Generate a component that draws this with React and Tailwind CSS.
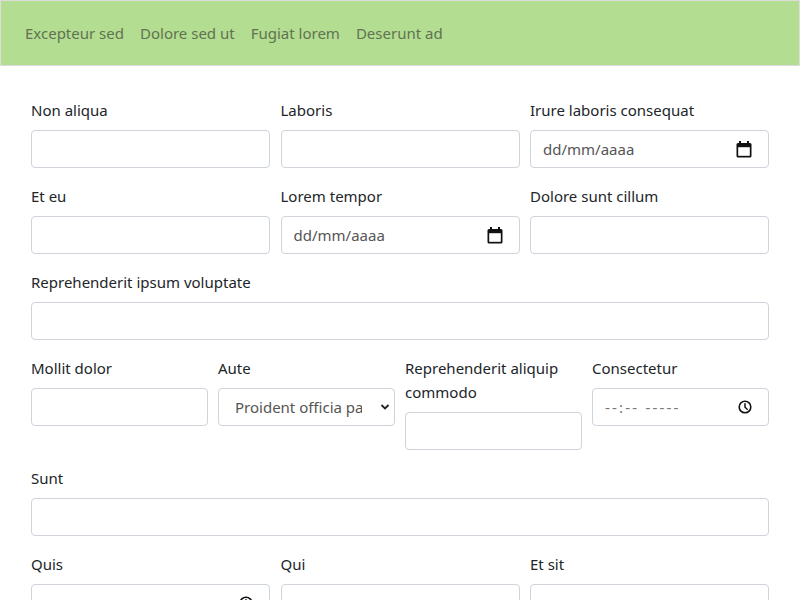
import React from "react";

const font = { fontFamily: '"Noto Sans", "Open Sans", sans-serif' };

function Label({ children }) {
  return <label className="block mb-2 text-[15px] leading-6 text-[#212529]">{children}</label>;
}

function TextInput() {
  return (
    <input
      type="text"
      className="block w-full h-[38px] rounded-[4px] border border-[#ced4da] bg-white px-3 text-[15px] text-[#212529] outline-none"
    />
  );
}

function CalendarIcon() {
  return (
    <svg width="16" height="17" viewBox="0 0 16 17" className="shrink-0">
      <rect x="3" y="0" width="2" height="3" fill="#111" />
      <rect x="11" y="0" width="2" height="3" fill="#111" />
      <rect x="0.5" y="2" width="15" height="14.5" rx="1.5" fill="#111" />
      <rect x="2.2" y="6.2" width="11.6" height="8.6" fill="#fff" />
    </svg>
  );
}

function ClockIcon() {
  return (
    <svg width="14" height="14" viewBox="0 0 14 14" className="shrink-0">
      <circle cx="7" cy="7" r="5.8" fill="none" stroke="#111" strokeWidth="1.6" />
      <path d="M7 3.8 V7.2 L9.2 9.2" fill="none" stroke="#111" strokeWidth="1.5" strokeLinecap="round" />
    </svg>
  );
}

function DateInput() {
  return (
    <div className="flex items-center justify-between w-full h-[38px] rounded-[4px] border border-[#ced4da] bg-white pl-3 pr-[16px] text-[15px] text-[#555]">
      <span>dd/mm/aaaa</span>
      <CalendarIcon />
    </div>
  );
}

function TimeInput() {
  return (
    <div className="flex items-center justify-between w-full h-[38px] rounded-[4px] border border-[#ced4da] bg-white pl-3 pr-[16px] text-[15px] text-[#777]">
      <span className="tracking-[2.2px]">--:-- -----</span>
      <ClockIcon />
    </div>
  );
}

function SelectInput() {
  return (
    <div className="relative w-full">
      <select
        className="block w-full h-[38px] appearance-none rounded-[4px] border border-[#ced4da] bg-white pl-4 pr-8 text-[15px] text-[#555] outline-none"
        style={font}
        defaultValue="a"
      >
        <option value="a">Proident officia pariatur</option>
      </select>
      <svg width="10" height="8" viewBox="0 0 10 8" className="absolute right-[5px] top-[15px] pointer-events-none">
        <path d="M1.5 2 L5 5.5 L8.5 2" fill="none" stroke="#222" strokeWidth="1.8" />
      </svg>
    </div>
  );
}

function Field({ label, children }) {
  return (
    <div className="mb-4">
      <Label>{label}</Label>
      {children}
    </div>
  );
}

export default function App() {
  return (
    <div className="w-[800px] h-[600px] overflow-hidden bg-white" style={font}>
      <nav className="h-[66px] border border-[#dcdcdc] bg-[#b3dd91] flex items-center px-4">
        {["Excepteur sed", "Dolore sed ut", "Fugiat lorem", "Deserunt ad"].map((t) => (
          <a key={t} className="px-2 text-[15px] leading-6 text-[#5f7351]">
            {t}
          </a>
        ))}
      </nav>
      <div className="px-[31px] pt-[32px]">
        <div className="grid grid-cols-3 gap-x-[10.5px]">
          <Field label="Non aliqua"><TextInput /></Field>
          <Field label="Laboris"><TextInput /></Field>
          <Field label="Irure laboris consequat"><DateInput /></Field>
          <Field label="Et eu"><TextInput /></Field>
          <Field label="Lorem tempor"><DateInput /></Field>
          <Field label="Dolore sunt cillum"><TextInput /></Field>
        </div>
        <Field label="Reprehenderit ipsum voluptate"><TextInput /></Field>
        <div className="grid grid-cols-4 gap-x-[10px]">
          <Field label="Mollit dolor"><TextInput /></Field>
          <Field label="Aute"><SelectInput /></Field>
          <Field label="Reprehenderit aliquip commodo"><TextInput /></Field>
          <Field label="Consectetur"><TimeInput /></Field>
        </div>
        <Field label="Sunt"><TextInput /></Field>
        <div className="grid grid-cols-3 gap-x-[10.5px]">
          <Field label="Quis"><TimeInput /></Field>
          <Field label="Qui"><TextInput /></Field>
          <Field label="Et sit"><TextInput /></Field>
        </div>
      </div>
    </div>
  );
}
